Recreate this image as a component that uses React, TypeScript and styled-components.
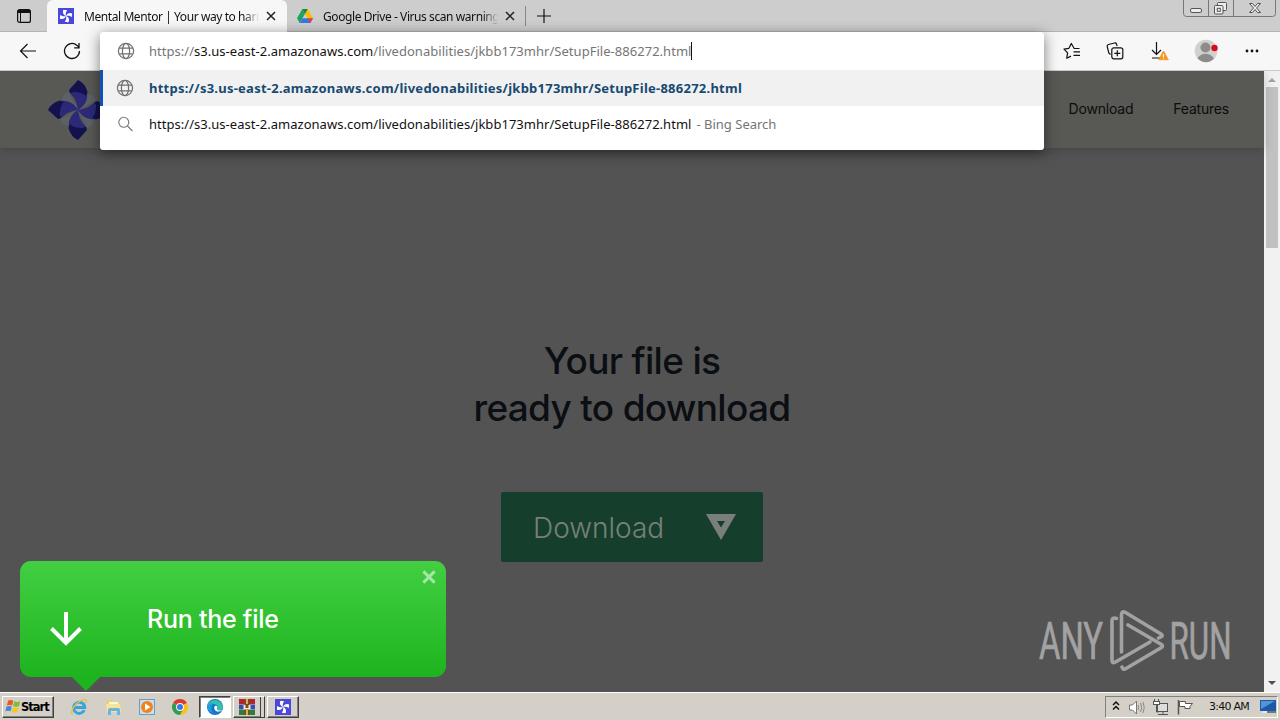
import React from 'react';
import styled, { createGlobalStyle } from "styled-components";

const URL_HOST = "s3.us-east-2.amazonaws.com";
const URL_PATH = "/livedonabilities/jkbb173mhr/SetupFile-886272.html";

const Globe = () => (
  <svg width="18" height="18" viewBox="0 0 18 18" fill="none" stroke="#707070" strokeWidth="1.2">
    <circle cx="9" cy="9" r="7.6" />
    <ellipse cx="9" cy="9" rx="3.6" ry="7.6" />
    <path d="M2.2 6.2h13.6M2.2 11.8h13.6" />
  </svg>
);

const Cross = ({ size = 10, color = "#222", weight = 1.5 }) => (
  <svg width={size} height={size} viewBox="0 0 10 10" stroke={color} strokeWidth={weight}>
    <path d="M1 1l8 8M9 1l-8 8" />
  </svg>
);

const Blades = ({ size = 16 }) => (
  <svg width={size} height={size} viewBox="0 0 16 16">
    <rect width="16" height="16" fill="#4a48dc" />
    {[0, 90, 180, 270].map((a) => (
      <path key={a} transform={`rotate(${a} 8 8)`} d="M8 8C5 7 4.300 3.800 5.500 1.800L9.300 2.300C7.600 4 7.500 6 8 8z" fill="#fff" />
    ))}
  </svg>
);

const Pinwheel = () => (
  <svg width="62" height="62" viewBox="-31 -31 62 62">
    {[0, 90, 180, 270].map((a) => (
      <path key={a} transform={`rotate(${a})`} d="M0 0C-4 -7 -9 -8 -15 -7C-18 -12 -14 -17 -8 -18C-8 -12 -3 -7 0 0z" fill="#5d6064" />
    ))}
    {[0, 90, 180, 270].map((a) => (
      <g key={a} transform={`rotate(${a})`}>
        <path d="M0 0C-1 -7 -3 -12 -8 -16.500L8.500 -20C11 -11 7 -4 0 0z" fill="#2c2a78" />
        <path d="M-9 -20L0 -30Q7 -27 9.500 -18L8 -14C4 -18 -2 -19 -8 -16.500z" fill="#14124d" />
      </g>
    ))}
  </svg>
);

const Drive = () => (
  <svg width="16" height="14" viewBox="0 0 16 14">
    <path d="M5.300 0h5.400L8 4.700 2.700 14 0 9.300z" fill="#1ea362" />
    <path d="M5.300 0h5.400L16 9.300h-5.400z" fill="#ffba00" />
    <path d="M5.400 9.300H16L13.300 14H2.700z" fill="#3777e3" />
    <path d="M10.600 9.300H16L13.300 14z" fill="#ea4335" />
    <path d="M5.300 0h5.400L8 4.700z" fill="#11854b" />
  </svg>
);

const TabMenu = () => (
  <svg width="14" height="14" viewBox="0 0 14 14" fill="none" stroke="#111">
    <rect x=".6" y=".6" width="12.800" height="12.800" rx="2" strokeWidth="1.200" />
    <path d="M1 2.500h12" strokeWidth="3" />
    <path d="M3.500 4v9" />
  </svg>
);

const WindowButtons = () => (
  <svg width="94" height="17" viewBox="0 0 94 17" fill="none" stroke="#777">
    <path d="M.5 0v13.500q0 3 3 3h86q3 0 3-3V0M25.500 0v16M50.500 0v16" />
    <rect x="7.500" y="8.500" width="11" height="4" rx="1.500" stroke="#555" fill="#eee" />
    <g stroke="#555" fill="#eee">
      <rect x="34.500" y="2.500" width="9" height="8" rx="1" />
      <rect x="31.500" y="5.500" width="8.500" height="8.500" rx="1" />
      <rect x="34.300" y="8.300" width="3" height="3" />
    </g>
    <path d="M66.500 3.500h3l2.500 3 2.500-3h3l-4 4.500 4 4.500h-3l-2.500-3-2.500 3h-3l4-4.500z" stroke="#555" fill="#eee" />
  </svg>
);

const Back = () => (
  <svg width="18" height="16" viewBox="0 0 18 16" fill="none" stroke="#111" strokeWidth="1.200">
    <path d="M17 8H1.500M8.500 1L1.500 8l7 7" />
  </svg>
);

const Reload = () => (
  <svg width="18" height="18" viewBox="0 0 18 18" fill="none" stroke="#111" strokeWidth="1.300">
    <path d="M16.500 9A7.500 7.500 0 1 1 14 3.400L16 5.300M16 1v4.800h-4.800" />
  </svg>
);

const Favorites = () => (
  <svg width="18" height="18" viewBox="0 0 18 18" fill="none" stroke="#111" strokeWidth="1.200">
    <path d="M16.500 6.500h-5.300L8.300 1.500 5.900 6.300 1 7.200l3.600 3.700-.9 5.300 4.300-2.100M10.500 9.800h6.500M10.500 13.300h6.500" strokeLinejoin="round" />
  </svg>
);

const Collections = () => (
  <svg width="18" height="18" viewBox="0 0 18 18" fill="none" stroke="#111" strokeWidth="1.200">
    <path d="M4.500 12.500L2.800 11 1.200 4.500q-.3-1.500 1.200-2L8.500 1q1.500-.3 2 1l.6 2" />
    <rect x="5.800" y="5.800" width="11" height="11" rx="2" />
    <path d="M11.300 8.300v6M8.300 11.300h6" />
  </svg>
);

const Downloads = () => (
  <svg width="20" height="20" viewBox="0 0 20 20" fill="none" stroke="#111" strokeWidth="1.200">
    <path d="M7.500 1v12M3 9l4.500 4.500L12 9M3 17h8" />
    <path d="M14.500 10l4.800 8.700H9.700z" fill="#f7941d" stroke="#f7941d" strokeWidth=".8" strokeLinejoin="round" />
    <path d="M14.500 13v3M14.500 16.800v1" stroke="#fff" />
  </svg>
);

const Avatar = () => (
  <svg width="24" height="24" viewBox="0 0 24 24">
    <circle cx="12" cy="12" r="11.300" fill="#d2d0ce" />
    <circle cx="11.500" cy="8.500" r="5" fill="#8e8c8a" />
    <path d="M3.500 19.500Q6 14.800 11.500 14.800T20 19.500Q16.500 23.200 12 23.200T3.500 19.500z" fill="#8e8c8a" />
    <circle cx="20.500" cy="9" r="3.200" fill="#d90b1c" />
  </svg>
);

const Dots = () => (
  <svg width="14" height="4" viewBox="0 0 14 4" fill="#111">
    <circle cx="2" cy="2" r="1.400" /><circle cx="7" cy="2" r="1.400" /><circle cx="12" cy="2" r="1.400" />
  </svg>
);

const Search = () => (
  <svg width="16" height="16" viewBox="0 0 16 16" fill="none" stroke="#777" strokeWidth="1.100">
    <circle cx="5.800" cy="6.300" r="5" />
    <path d="M9.500 10l5 5" />
  </svg>
);

const AnyRun = () => (
  <svg width="200" height="64" viewBox="0 0 200 64">
    <g fill="#a2a2a2" stroke="#a2a2a2" strokeWidth=".7" fontFamily="Roboto, sans-serif" fontSize="51">
      <text x="3" y="50" textLength="64" lengthAdjust="spacingAndGlyphs">ANY</text>
      <text x="133.500" y="50" textLength="62" lengthAdjust="spacingAndGlyphs">RUN</text>
    </g>
    <g fill="none" stroke="#a2a2a2" strokeWidth="3.600" strokeLinejoin="round" strokeLinecap="round">
      <path d="M80.500 9.500Q76 8 76 12V51q0 4 3.500 2L114 33" />
      <path d="M85.500 43V6q0-4.500 4-2.500L125 25q2.500 1.500 0 2.800L122.500 29" />
      <path d="M92 16l33.500 19.500q2 1.500 0 3L90 59.500q-3 2-4-1.500" />
    </g>
  </svg>
);

const IE = () => (
  <svg width="18" height="18" viewBox="0 0 18 18" fill="none">
    <path d="M14.300 12.200A5.600 5.600 0 1 1 14.800 9.500H4.800" stroke="#37a6df" strokeWidth="2.800" />
    <path d="M2.500 16.500C-.5 14 5 5 12 2.200c4-1.500 5 .3 3.800 3" stroke="#eabf3c" strokeWidth="1.300" />
  </svg>
);

const Explorer = () => (
  <svg width="18" height="18" viewBox="0 0 18 18">
    <path d="M2 2h5l1 2h7v9H2z" fill="#edcf70" />
    <path d="M4 4h9v3H4z" fill="#fff7cf" />
    <path d="M1 6h14l1 8H2z" fill="#f6e29a" />
    <path d="M3 17v-5q0-2 2-2h8q2 0 2 2v5h-3v-4H6v4z" fill="#69b5de" />
  </svg>
);

const Player = () => (
  <svg width="16" height="16" viewBox="0 0 16 16">
    <rect x=".5" y=".5" width="15" height="15" fill="#c9dfef" stroke="#6a9cc4" />
    <circle cx="8" cy="8" r="6" fill="#f0831c" />
    <path d="M6 4.500l5.500 3.500L6 11.500z" fill="#fff" />
  </svg>
);

const Chrome = () => (
  <svg width="16" height="16" viewBox="0 0 16 16">
    <path d="M8 8L1.070 4A8 8 0 0 1 14.930 4z" fill="#df3a2e" />
    <path d="M8 8L1.070 4A8 8 0 0 0 8 16l3.500-6z" fill="#2f9e4f" />
    <path d="M8 8l6.930-4A8 8 0 0 1 8 16l3.500-6z" fill="#fbc116" />
    <circle cx="8" cy="8" r="3.900" fill="#fff" />
    <circle cx="8" cy="8" r="3" fill="#3b78e7" />
  </svg>
);

const Edge = () => (
  <svg width="16" height="16" viewBox="0 0 16 16">
    <circle cx="8" cy="8" r="8" fill="#1477c8" />
    <path d="M.3 7A8 8 0 0 1 16 8c0 3-3 4-5.500 3C12 8 10 5 6.500 5 3.500 5 1.300 6 .3 7z" fill="#35c1a8" />
    <path d="M.3 7C1 5 4 3.500 7 4.500c-3 1-4 6-1 9C2 13 0 10 .3 7z" fill="#1f9fe0" />
    <path d="M8 7c2-1 3 1 2 3.200 1 1.500 3.500 1.500 5 .8-2 2-5.500 2-7 0-1-1.500-1-3 0-4z" fill="#fff" />
  </svg>
);

const WinRar = () => (
  <svg width="16" height="16" viewBox="0 0 16 16">
    <path d="M0 0h16v5H0z" fill="#b3242e" />
    <path d="M0 5.500h16v5H0z" fill="#3a4cae" />
    <path d="M0 11h16v5H0z" fill="#2c8034" />
    <path d="M5.500 0h5v16h-5z" fill="#7d4a23" />
    <path d="M4.500 6v4.500h7V6h-2v3h-3V6z" fill="#f3ecd2" />
    <path d="M7 0h2v5H7zM7 11h2v5H7z" fill="#d8b258" />
  </svg>
);

const WinFlag = () => (
  <svg width="16" height="15" viewBox="0 0 16 15">
    <path d="M3.200 1.500Q6 .2 8.300 1.800L7.100 6.600Q4.600 5.400 1.900 6.300z" fill="#ea5a25" />
    <path d="M9.300 2.300q3 1.400 6 0L14 7q-3 1.300-5.900 0z" fill="#7fbb36" />
    <path d="M1.600 7.400q2.700-1.100 5.200.3L5.600 12.300Q3 11.200.3 12.200z" fill="#3f8bd8" />
    <path d="M7.900 8.100q3 1.500 5.800.1l-1.300 4.700q-2.900 1.300-5.700 0z" fill="#f8c622" />
  </svg>
);

const TrayIcons = () => (
  <svg width="84" height="18" viewBox="0 0 84 18" fill="none" stroke="#555">
    <path d="M2 7l3-3 3 3M2 11.500l3-3 3 3" stroke="#111" strokeWidth="1.500" />
    <path d="M18.500 7h3l4-4v13l-4-4h-3z" fill="#fff" stroke="#777" />
    <path d="M27 7q1.500 2.500 0 5M29.500 5q2.500 4.500 0 9M32 4q2.500 5.500 0 11" stroke="#888" />
    <rect x="46.500" y="5.500" width="10" height="8" fill="#ddd" />
    <path d="M47 16.500h10M52 14v2M43.500 1v4M47.500 1v4M45.500 7v7h2" />
    <rect x="42.500" y="3.500" width="6" height="3" fill="#fff" />
    <path d="M67.500 2v14.500" strokeWidth="1.500" />
    <path d="M68.500 3.500h6v2h7l-2.500 3v2h-5v-2h-5.500z" fill="#fff" />
  </svg>
);

const Desktop = () => (
  <svg width="16" height="15" viewBox="0 0 16 15">
    <path d="M0 1h16v11H0z" fill="#1c59a8" />
    <path d="M1 2h14L1 10z" fill="#4f95d8" />
    <path d="M2 12h5v2H2z" fill="#dce8f2" />
    <path d="M7 12h9v2H7z" fill="#777" />
  </svg>
);

const App = () => {
  return (
    <Screen>
      <GlobalStyle />
      <TabStrip>
        <TabMenuBox><TabMenu /></TabMenuBox>
        <Tab $active>
          <Blades />
          <TabTitle $width={177}>Mental Mentor | Your way to harm</TabTitle>
          <Cross />
        </Tab>
        <Tab>
          <Drive />
          <TabTitle $width={177}>Google Drive - Virus scan warning</TabTitle>
          <Cross />
        </Tab>
        <NewTab>
          <svg width="14" height="14" viewBox="0 0 14 14" stroke="#111" strokeWidth="1.200"><path d="M7 0v14M0 7h14" /></svg>
        </NewTab>
        <WindowBox><WindowButtons /></WindowBox>
      </TabStrip>

      <Toolbar>
        <Tools $gap={26}>
          <Back />
          <Reload />
        </Tools>
        <Tools $gap={25}>
          <Favorites />
          <Collections />
          <Downloads />
          <Avatar />
          <Dots />
        </Tools>
        <Omnibox>
          <Suggestion $height={38}>
            <Globe />
            <UrlText $color="#757575">https://<Host>{URL_HOST}</Host>{URL_PATH}</UrlText>
            <Caret />
          </Suggestion>
          <Suggestion $height={36} $selected>
            <Globe />
            <UrlText $color="#174a70" $bold>https://{URL_HOST}{URL_PATH}</UrlText>
          </Suggestion>
          <Suggestion $height={36}>
            <Search />
            <UrlText $color="#111">https://{URL_HOST}{URL_PATH}</UrlText>
            <Engine>- Bing Search</Engine>
          </Suggestion>
        </Omnibox>
      </Toolbar>

      <Viewport>
        <Page>
          <SiteHeader>
            <Pinwheel />
            <SiteNav>
              <span>Download</span>
              <span>Features</span>
            </SiteNav>
          </SiteHeader>
          <Title>Your file is<br />ready to download</Title>
          <DownloadButton>
            <span>Download</span>
            <svg width="30" height="26" viewBox="0 0 30 26" fill="#7b7f7c" fillRule="evenodd">
              <path d="M0 0h30L15 26zM11 7l4 6.500L19 7z" />
            </svg>
          </DownloadButton>
          <Callout>
            <svg width="32" height="34" viewBox="0 0 32 34" fill="none" stroke="#fff" strokeWidth="4">
              <path d="M16 0v31M1.500 16.500L16 31l14.500-14.500" />
            </svg>
            <CalloutText>Run the file</CalloutText>
            <CalloutClose><Cross size={14} color="#a6e6a6" weight={2.1} /></CalloutClose>
          </Callout>
          <Watermark><AnyRun /></Watermark>
        </Page>
        <Scrollbar>
          <Arrow $color="#a3a3a3" />
          <Thumb />
          <Arrow $color="#505050" $down />
        </Scrollbar>
      </Viewport>

      <Taskbar>
        <StartButton><WinFlag />Start</StartButton>
        <QuickLaunch>
          <IE />
          <Explorer />
          <Player />
          <Chrome />
        </QuickLaunch>
        <TaskGroup>
          <TaskButton $active><Edge /></TaskButton>
          <TaskButton $stacked><WinRar /></TaskButton>
          <TaskButton><Blades /></TaskButton>
        </TaskGroup>
        <Tray>
          <TrayIcons />
          <Clock>3:40 AM</Clock>
          <Desktop />
        </Tray>
      </Taskbar>
    </Screen>
  )
}

export default App;

const GlobalStyle = createGlobalStyle`
    * { box-sizing: border-box; }
    body { margin: 0; overflow: hidden; }
    svg { display: block; flex-shrink: 0; }
`;
const Screen = styled.div`
    width: 1280px;
    height: 720px;
    display: flex;
    flex-direction: column;
    overflow: hidden;
    font-family: "Noto Sans", sans-serif;
    font-size: 12px;
    color: #111;
`;
const TabStrip = styled.div`
    height: 32px;
    display: flex;
    background: #cdcdcd;
    border-bottom: 1px solid #b4b4b4;
`;
const TabMenuBox = styled.div`
    width: 47px;
    display: flex;
    align-items: center;
    padding-left: 17px;
`;
const Tab = styled.div<{ $active?: boolean }>`
    width: ${p => p.$active ? 240 : 238}px;
    height: 32px;
    display: flex;
    align-items: center;
    padding-left: ${p => p.$active ? 11 : 10}px;
    background: ${p => p.$active ? "#f7f7f7" : "transparent"};
    border-radius: 6px 6px 0 0;
`;
const TabTitle = styled.div<{ $width: number }>`
    width: ${p => p.$width}px;
    margin: 0 5px 0 10px;
    overflow: hidden;
    white-space: nowrap;
    letter-spacing: -.42px;
    mask-image: linear-gradient(to right, #000 90%, transparent 99%);
`;
const NewTab = styled.div`
    height: 20px;
    margin-top: 6px;
    padding: 3px 0 0 11px;
    border-left: 1px solid #888;
`;
const WindowBox = styled.div`
    margin: 0 3px 0 auto;
`;
const Toolbar = styled.div`
    position: relative;
    z-index: 2;
    height: 39px;
    display: flex;
    align-items: center;
    justify-content: space-between;
    padding: 0 21px 0 19px;
    background: #f7f7f7;
    border-bottom: 1px solid #c9c9c9;
`;
const Tools = styled.div<{ $gap: number }>`
    display: flex;
    align-items: center;
    gap: ${p => p.$gap}px;

    svg:nth-child(5){
      margin-left: 2px;
    }
`;
const Omnibox = styled.div`
    position: absolute;
    left: 100px;
    top: 0;
    width: 944px;
    height: 118px;
    background: #fff;
    border-radius: 3px;
    box-shadow: 0 3px 14px rgba(0, 0, 0, .5);
`;
const Suggestion = styled.div<{ $height: number; $selected?: boolean }>`
    height: ${p => p.$height}px;
    display: flex;
    align-items: center;
    padding-left: ${p => p.$selected ? 13 : 17}px;
    background: ${p => p.$selected ? "#f1f1f1" : "transparent"};
    border-left: ${p => p.$selected ? "3px solid #1252b8" : "0"};
    white-space: nowrap;

    svg{
      width: 18px;
      margin-right: ${p => p.$selected ? 15 : 14}px;
    }
`;
const UrlText = styled.span<{ $color: string; $bold?: boolean }>`
    font-size: 13px;
    color: ${p => p.$color};
    font-weight: ${p => p.$bold ? 700 : 400};
    letter-spacing: ${p => p.$bold ? .245 : .03}px;
`;
const Host = styled.span`
    color: #111;
`;
const Caret = styled.span`
    width: 1px;
    height: 18px;
    background: #111;
`;
const Engine = styled.span`
    margin-left: 5px;
    font-size: 13px;
    color: #757575;
`;
const Viewport = styled.div`
    height: 621px;
    display: flex;
`;
const Page = styled.div`
    position: relative;
    width: 1264px;
    display: flex;
    flex-direction: column;
    align-items: center;
    background: #535353;
    font-family: Inter, sans-serif;
`;
const SiteHeader = styled.div`
    width: 100%;
    height: 77px;
    display: flex;
    align-items: center;
    justify-content: space-between;
    padding: 0 35px 0 47px;
    background: #585855;
    box-shadow: 0 2px 10px rgba(0, 0, 0, .18);
`;
const SiteNav = styled.div`
    display: flex;
    gap: 40px;
    padding-bottom: 2px;
    font-size: 14px;
    letter-spacing: -.2px;
    color: #0c0c0c;
`;
const Title = styled.h1`
    margin: 189px 0 0;
    font-size: 37px;
    line-height: 47px;
    font-weight: 540;
    letter-spacing: -.7px;
    text-align: center;
    color: #0b0e12;
`;
const DownloadButton = styled.div`
    width: 262px;
    height: 70px;
    margin-top: 61px;
    padding: 0 27px 0 32px;
    display: flex;
    align-items: center;
    justify-content: space-between;
    border-radius: 2px;
    background: #153f2c;
    color: #78807b;
    font-size: 28px;
    font-weight: 300;

    span{
      padding-top: 1px;
    }
`;
const Callout = styled.div`
    position: absolute;
    left: 20px;
    top: 490px;
    width: 426px;
    height: 116px;
    display: flex;
    align-items: center;
    padding: 20px 0 0 30px;
    border-radius: 11px;
    background: linear-gradient(#42cf42, #1eb41e);

    &::after{
      content: "";
      position: absolute;
      left: 51px;
      top: 115px;
      border: 15px solid transparent;
      border-top-color: #1eb41e;
      border-bottom: 0;
    }
`;
const CalloutText = styled.div`
    margin: -20px 0 0 65px;
    font-size: 25px;
    font-weight: 500;
    letter-spacing: -.25px;
    color: #fff;
`;
const CalloutClose = styled.div`
    position: absolute;
    right: 10px;
    top: 9px;
`;
const Watermark = styled.div`
    position: absolute;
    left: 1036px;
    top: 538px;
`;
const Scrollbar = styled.div`
    width: 16px;
    display: flex;
    flex-direction: column;
    align-items: center;
    background: #f1f1f1;
`;
const Arrow = styled.div<{ $color: string; $down?: boolean }>`
    margin: ${p => p.$down ? "auto 0 7px" : "7px 0 5px"};
    border: 4px solid transparent;
    border-top: ${p => p.$down ? `4px solid ${p.$color}` : "0"};
    border-bottom: ${p => p.$down ? "0" : `4px solid ${p.$color}`};
`;
const Thumb = styled.div`
    width: 12px;
    height: 161px;
    background: #c1c1c1;
`;
const Taskbar = styled.div`
    height: 28px;
    display: flex;
    align-items: center;
    padding: 0 2px;
    background: #d4d0c8;
    border-top: 1px solid #fff;
`;
const StartButton = styled.div`
    width: 52px;
    height: 22px;
    display: flex;
    align-items: center;
    padding-left: 2px;
    border: 1px solid;
    border-color: #fff #404040 #404040 #fff;
    box-shadow: inset -1px -1px #808080;
    font-family: "DejaVu Sans", sans-serif;
    font-size: 11.5px;
    font-weight: 700;
    letter-spacing: -1px;
    color: #000;
`;
const QuickLaunch = styled.div`
    width: 145px;
    display: flex;
    gap: 16.5px;
    padding-left: 16px;
    align-items: center;
`;
const TaskGroup = styled.div`
    display: flex;
    gap: 2px;
`;
const TaskButton = styled.div<{ $active?: boolean; $stacked?: boolean }>`
    width: 32px;
    height: 22px;
    display: flex;
    align-items: center;
    padding-left: ${p => p.$stacked ? 5 : 7}px;
    border: 1px solid;
    background: ${p => p.$active ? "#fff" : "#d4d0c8"};
    border-color: ${p => p.$active ? "#404040 #fff #fff #404040" : "#fff #404040 #404040 #fff"};
    box-shadow: ${p => p.$active ? "inset 1px 1px #808080" : p.$stacked ? "inset -3px 0 #d4d0c8, inset -4px 0 #404040, inset -1px -1px #808080" : "inset -1px -1px #808080"};
`;
const Tray = styled.div`
    width: 173px;
    height: 22px;
    margin-left: auto;
    display: flex;
    align-items: center;
    padding-left: 5px;
    border: 1px solid;
    border-color: #808080 #fff #fff #808080;
`;
const Clock = styled.span`
    width: 51px;
    margin-left: 14px;
    font-family: "DejaVu Sans", sans-serif;
    font-size: 11px;
    letter-spacing: -.75px;
    white-space: nowrap;
`;
